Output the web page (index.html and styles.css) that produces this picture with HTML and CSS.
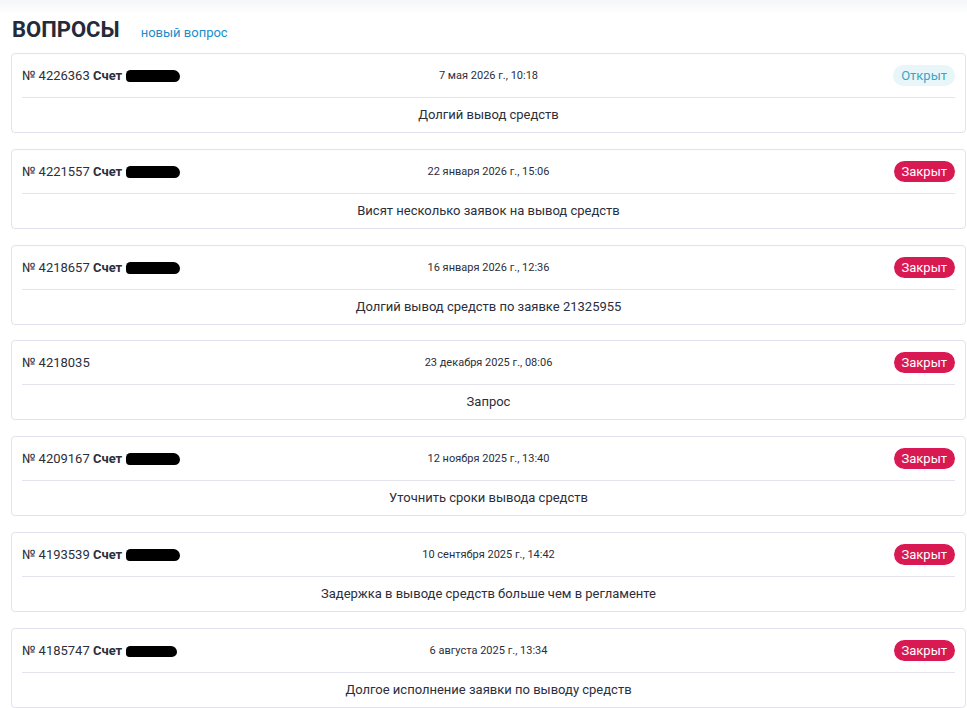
FILE: index.html
```html
<!DOCTYPE html>
<html lang="ru">
<head>
  <meta charset="UTF-8">
  <title>Вопросы</title>
  <link rel="stylesheet" href="styles.css">
</head>
<body>
  <div class="page">
    <div class="page-head">
      <h1 class="page-title">ВОПРОСЫ</h1>
      <a class="new-link" href="#">новый вопрос</a>
    </div>

    <div class="ticket-list">
      <div class="ticket">
        <div class="ticket-head">
          <div class="ticket-num">№ 4226363 <b>Счет</b> <span class="hidden-acc"></span></div>
          <div class="ticket-date">7 мая 2026 г., 10:18</div>
          <div class="ticket-status"><span class="badge badge-open">Открыт</span></div>
        </div>
        <div class="ticket-subject">Долгий вывод средств</div>
      </div>

      <div class="ticket">
        <div class="ticket-head">
          <div class="ticket-num">№ 4221557 <b>Счет</b> <span class="hidden-acc"></span></div>
          <div class="ticket-date">22 января 2026 г., 15:06</div>
          <div class="ticket-status"><span class="badge badge-closed">Закрыт</span></div>
        </div>
        <div class="ticket-subject">Висят несколько заявок на вывод средств</div>
      </div>

      <div class="ticket">
        <div class="ticket-head">
          <div class="ticket-num">№ 4218657 <b>Счет</b> <span class="hidden-acc"></span></div>
          <div class="ticket-date">16 января 2026 г., 12:36</div>
          <div class="ticket-status"><span class="badge badge-closed">Закрыт</span></div>
        </div>
        <div class="ticket-subject">Долгий вывод средств по заявке 21325955</div>
      </div>

      <div class="ticket">
        <div class="ticket-head">
          <div class="ticket-num">№ 4218035</div>
          <div class="ticket-date">23 декабря 2025 г., 08:06</div>
          <div class="ticket-status"><span class="badge badge-closed">Закрыт</span></div>
        </div>
        <div class="ticket-subject">Запрос</div>
      </div>

      <div class="ticket">
        <div class="ticket-head">
          <div class="ticket-num">№ 4209167 <b>Счет</b> <span class="hidden-acc"></span></div>
          <div class="ticket-date">12 ноября 2025 г., 13:40</div>
          <div class="ticket-status"><span class="badge badge-closed">Закрыт</span></div>
        </div>
        <div class="ticket-subject">Уточнить сроки вывода средств</div>
      </div>

      <div class="ticket">
        <div class="ticket-head">
          <div class="ticket-num">№ 4193539 <b>Счет</b> <span class="hidden-acc"></span></div>
          <div class="ticket-date">10 сентября 2025 г., 14:42</div>
          <div class="ticket-status"><span class="badge badge-closed">Закрыт</span></div>
        </div>
        <div class="ticket-subject">Задержка в выводе средств больше чем в регламенте</div>
      </div>

      <div class="ticket">
        <div class="ticket-head">
          <div class="ticket-num">№ 4185747 <b>Счет</b> <span class="hidden-acc short"></span></div>
          <div class="ticket-date">6 августа 2025 г., 13:34</div>
          <div class="ticket-status"><span class="badge badge-closed">Закрыт</span></div>
        </div>
        <div class="ticket-subject">Долгое исполнение заявки по выводу средств</div>
      </div>
    </div>
  </div>
</body>
</html>
```

FILE: styles.css
```css
body {
  margin: 0;
  background: #fff;
  color: #2b2e3b;
  font-family: Roboto, "Noto Sans", Arial, sans-serif;
  font-size: 13px;
}
.page {
  min-height: 100vh;
  padding: 0 1px 0 11px;
  background: linear-gradient(#f5f6f8 0, #fff 14px);
}
.page-head {
  display: flex;
  align-items: baseline;
  padding: 17px 0 0 1px;
  height: 53px;
  box-sizing: border-box;
}
.page-title {
  margin: 0;
  font-size: 22px;
  font-weight: 700;
  line-height: 26px;
  color: #252a3a;
}
.new-link {
  margin-left: 21px;
  color: #1b8dcc;
  text-decoration: none;
  font-size: 13px;
}
.ticket-list {
  display: flex;
  flex-direction: column;
  gap: 15.8px;
}
.ticket {
  border: 1px solid #e2e2ee;
  border-radius: 4px;
  background: #fff;
  padding: 0 10px;
}
.ticket-head {
  display: grid;
  grid-template-columns: 1fr auto 1fr;
  align-items: center;
  height: 43px;
  border-bottom: 1px solid #e4e4ee;
}
.ticket-num {
  color: #2b2e3b;
}
.ticket-num b {
  font-weight: 700;
}
/* номер счета скрыт */
.hidden-acc {
  display: inline-block;
  width: 54px;
  height: 12px;
  background: #000;
  border-radius: 5px 7px 6px 4px;
  vertical-align: -2px;
}
.hidden-acc.short {
  width: 51px;
  height: 11px;
}
.ticket-date {
  font-size: 11px;
  text-align: center;
}
.ticket-status {
  text-align: right;
}
.badge {
  display: inline-block;
  height: 21px;
  line-height: 21px;
  padding: 0 8px;
  border-radius: 11px;
  font-size: 13px;
}
.badge-closed {
  background: #d91a52;
  color: #fff;
}
.badge-open {
  background: #e9f6f9;
  color: #3ea4c3;
}
.ticket-subject {
  height: 34px;
  line-height: 34px;
  text-align: center;
}
```
